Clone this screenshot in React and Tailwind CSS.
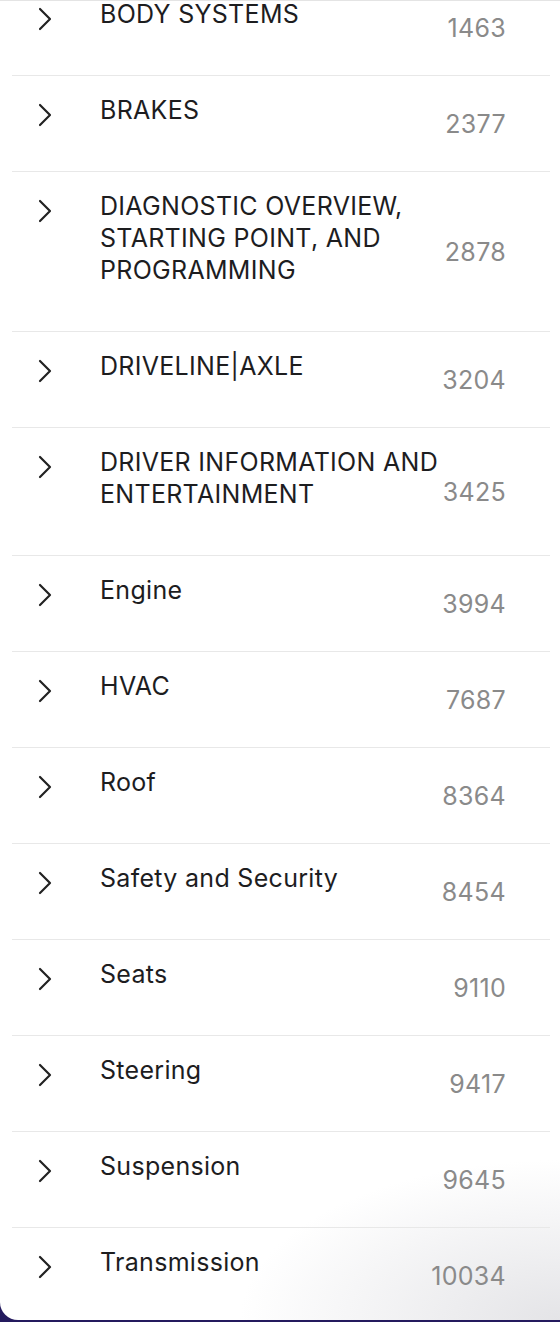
import React from 'react';

const groups = [
  { name: 'BODY SYSTEMS', count: 1463 },
  { name: 'BRAKES', count: 2377 },
  { name: 'DIAGNOSTIC OVERVIEW, STARTING POINT, AND PROGRAMMING', count: 2878 },
  { name: 'DRIVELINE|AXLE', count: 3204 },
  { name: 'DRIVER INFORMATION AND ENTERTAINMENT', count: 3425 },
  { name: 'Engine', count: 3994 },
  { name: 'HVAC', count: 7687 },
  { name: 'Roof', count: 8364 },
  { name: 'Safety and Security', count: 8454 },
  { name: 'Seats', count: 9110 },
  { name: 'Steering', count: 9417 },
  { name: 'Suspension', count: 9645 },
  { name: 'Transmission', count: 10034 },
];

const Chevron = () => (
  <svg width="14" height="24" viewBox="0 0 14 24" fill="none" className="mt-[27px] ml-[26px] shrink-0">
    <polyline points="2,2 12,12 2,22" stroke="#222222" strokeWidth="2.2" strokeLinecap="round" strokeLinejoin="round" />
  </svg>
);

const GroupRow = ({ name, count, first }) => (
  <div className={`flex border-b border-[#e8e8e8] ${first ? 'mt-[-21px]' : ''}`}>
    <Chevron />
    <div className="ml-[48px] w-[346px] pt-[18px] pb-[45px] text-[25px] leading-8 tracking-[0.3px] text-[#1d1d1f]">{name}</div>
    <div className="flex-1 self-center pr-[44px] text-right text-[25px] leading-8 tracking-[0.3px] text-[#8a8a8a]">{count}</div>
  </div>
);

export default function App() {
  return (
    <div className="h-[1322px] w-[560px] bg-[#241a5e] font-['Inter',sans-serif]">
      <div className="h-[1320px] overflow-hidden rounded-bl-[18px] border-t border-[#e4e4e4] bg-[radial-gradient(ellipse_320px_160px_at_100%_100%,#e4e4e7_0%,#ffffff_100%)]">
        <div className="ml-3 mr-[10px]">
          {groups.map((g, i) => (
            <GroupRow key={g.name} name={g.name} count={g.count} first={i === 0} />
          ))}
        </div>
      </div>
    </div>
  );
}
